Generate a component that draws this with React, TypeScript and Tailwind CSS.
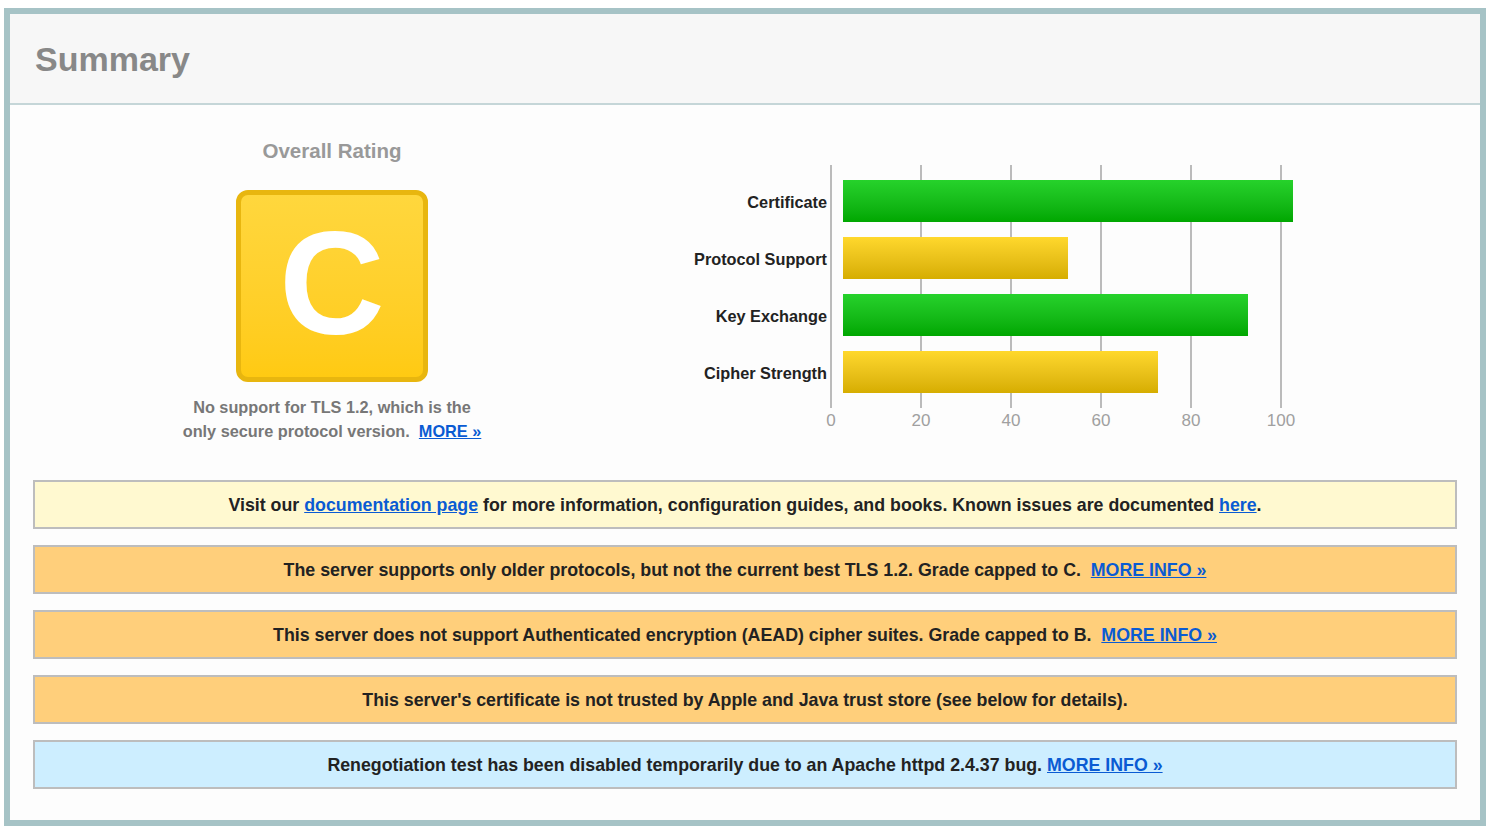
import React from "react";

type bar = {
  label: string;
  value: number;
  color: "green" | "yellow";
};

const bars: bar[] = [
  { label: "Certificate", value: 100, color: "green" },
  { label: "Protocol Support", value: 50, color: "yellow" },
  { label: "Key Exchange", value: 90, color: "green" },
  { label: "Cipher Strength", value: 70, color: "yellow" },
];

const ticks = [0, 20, 40, 60, 80, 100];

const linkCls = "text-[#0a5bd3] underline";

const Notice = ({ bg, children }: { bg: string; children: React.ReactNode }) => (
  <div
    className={`h-[49px] border-2 border-[#bdbdbd] flex items-center justify-center pt-[2px] text-[17.8px] font-bold text-[#222] ${bg}`}
  >
    <p className="m-0">{children}</p>
  </div>
);

const Chart = () => {
  return (
    <div className="flex mt-[60px]">
      <div className="w-[196px] flex flex-col gap-[15px] pt-[16px] mr-[3px]">
        {bars.map((b) => (
          <div key={b.label} className="h-[42px] flex items-center justify-end text-[16.3px] font-bold text-[#222]">
            {b.label}
          </div>
        ))}
      </div>
      <div className="relative w-[470px] h-[243px]">
        {ticks.map((t, i) => (
          <div key={t}>
            <div className="absolute top-0 h-[243px] w-[2px] bg-[#bbbbbb]" style={{ left: i * 90 }} />
            <div
              className="absolute top-[246px] w-[40px] -ml-[19px] text-center text-[17px] text-[#a0a0a0] leading-[20px]"
              style={{ left: i * 90 }}
            >
              {t}
            </div>
          </div>
        ))}
        <div className="relative flex flex-col gap-[15px] pt-[15px] pl-[13px]">
          {bars.map((b) => (
            <div
              key={b.label}
              className={
                b.color === "green"
                  ? "h-[42px] bg-gradient-to-b from-[#26d22b] to-[#00a700]"
                  : "h-[42px] bg-gradient-to-b from-[#ffd82c] to-[#d6ad00]"
              }
              style={{ width: b.value * 4.5 }}
            />
          ))}
        </div>
      </div>
    </div>
  );
};

const App = () => {
  return (
    <div className="w-[1491px] h-[831px] bg-white pt-[8px] pl-[4px] font-['Liberation_Sans',Arial,sans-serif]">
      <div className="w-[1482px] h-[818px] border-[6px] border-[#a6c3c6] bg-[#fdfdfd]">
        <div className="h-[91px] bg-[#f7f7f7] border-b-2 border-[#c5d6d8] flex items-center pl-[25px]">
          <h1 className="m-0 text-[34px] font-bold text-[#888888] leading-none">Summary</h1>
        </div>
        <div className="px-[23px]">
          <div className="h-[375px] flex">
            <div className="w-[598px] flex flex-col items-center pt-[34px]">
              <div className="text-[20.5px] font-bold text-[#999999] leading-[24px]">Overall Rating</div>
              <div className="mt-[27px] w-[192px] h-[192px] rounded-[12px] border-[5px] border-[#e8b60f] bg-gradient-to-b from-[#ffd73d] to-[#ffca12] flex items-center justify-center">
                <span className="text-white font-bold text-[146px] leading-none -mt-[4px]">C</span>
              </div>
              <div className="mt-[13px] text-center text-[16.3px] font-bold text-[#777777] leading-[24px]">
                No support for TLS 1.2, which is the
                <br />
                only secure protocol version.&nbsp;&nbsp;<a href="#" className={linkCls}>MORE »</a>
              </div>
            </div>
            <Chart />
          </div>
          <div className="flex flex-col gap-[16px]">
            <Notice bg="bg-[#fff9d0]">
              Visit our <a href="#" className={linkCls}>documentation page</a> for more information, configuration guides, and books. Known issues are documented <a href="#" className={linkCls}>here</a>.
            </Notice>
            <Notice bg="bg-[#ffcf7b]">
              The server supports only older protocols, but not the current best TLS 1.2. Grade capped to C.&nbsp;&nbsp;<a href="#" className={linkCls}>MORE INFO »</a>
            </Notice>
            <Notice bg="bg-[#ffcf7b]">
              This server does not support Authenticated encryption (AEAD) cipher suites. Grade capped to B.&nbsp;&nbsp;<a href="#" className={linkCls}>MORE INFO »</a>
            </Notice>
            <Notice bg="bg-[#ffcf7b]">
              This server's certificate is not trusted by Apple and Java trust store (see below for details).
            </Notice>
            <Notice bg="bg-[#cdeeff]">
              Renegotiation test has been disabled temporarily due to an Apache httpd 2.4.37 bug. <a href="#" className={linkCls}>MORE INFO »</a>
            </Notice>
          </div>
        </div>
      </div>
    </div>
  );
};

export default App;
